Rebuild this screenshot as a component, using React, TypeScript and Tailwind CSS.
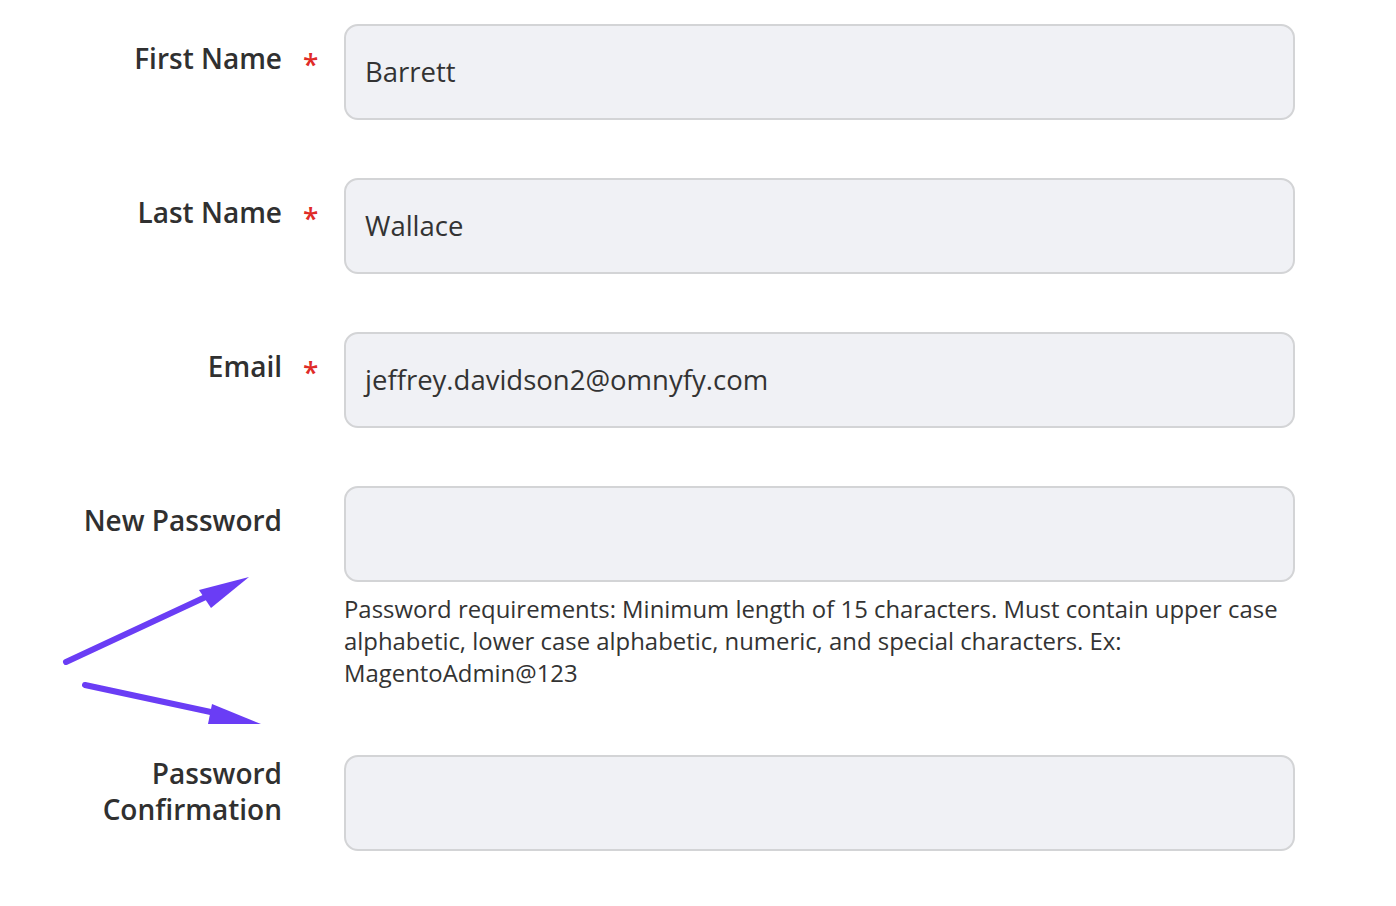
import React from "react";

function Row({ label, required, value, children, mt, lpt }: { label: React.ReactNode; required?: boolean; value?: string; children?: React.ReactNode; mt?: string; lpt?: string }) {
  return (
    <div className={`flex ${mt ?? ""}`}>
      <div className={`w-[282px] shrink-0 ${lpt ?? "pt-[16px]"} text-right text-[28px] leading-[36px] font-semibold text-[#303030]`}>{label}</div>
      <div className="w-[62px] shrink-0 pt-[22px] pl-[21px] text-[28px] leading-[36px] font-semibold text-[#e02b27]">{required ? "*" : ""}</div>
      <div className="w-[951px] shrink-0">
        <div className="h-[96px] rounded-[14px] border-2 border-[#d3d4d6] bg-[#f0f1f5] pl-[19px] flex items-center text-[27.5px] leading-[36px] text-[#333333]">
          {value}
        </div>
        {children}
      </div>
    </div>
  );
}

export default function App() {
  return (
    <div className="relative w-[1396px] h-[906px] bg-white pt-[24px]" style={{ fontFamily: '"Open Sans", sans-serif' }}>
      <Row label="First Name" required value="Barrett" />
      <Row label="Last Name" required value="Wallace" mt="mt-[58px]" />
      <Row label="Email" required value="jeffrey.davidson2@omnyfy.com" mt="mt-[58px]" />
      <Row label="New Password" mt="mt-[58px]">
        <p className="mt-[11px] text-[23.9px] leading-[32px] text-[#333333] pr-[8px]">
          Password requirements: Minimum length of 15 characters. Must contain upper case alphabetic, lower case alphabetic, numeric, and special characters. Ex: MagentoAdmin@123
        </p>
      </Row>
      <Row label={<>Password<br />Confirmation</>} mt="mt-[66px]" lpt="pt-0" />
      <svg className="absolute left-0 top-0 pointer-events-none" width="1396" height="906" viewBox="0 0 1396 906">
        <line x1="66" y1="662" x2="212" y2="594" stroke="#6a3df5" strokeWidth="6" strokeLinecap="round" />
        <polygon points="249,577 199,590 211,608" fill="#6a3df5" />
        <line x1="85" y1="685" x2="220" y2="714" stroke="#6a3df5" strokeWidth="6" strokeLinecap="round" />
        <polygon points="261,724 212,704 208,724" fill="#6a3df5" />
      </svg>
    </div>
  );
}
